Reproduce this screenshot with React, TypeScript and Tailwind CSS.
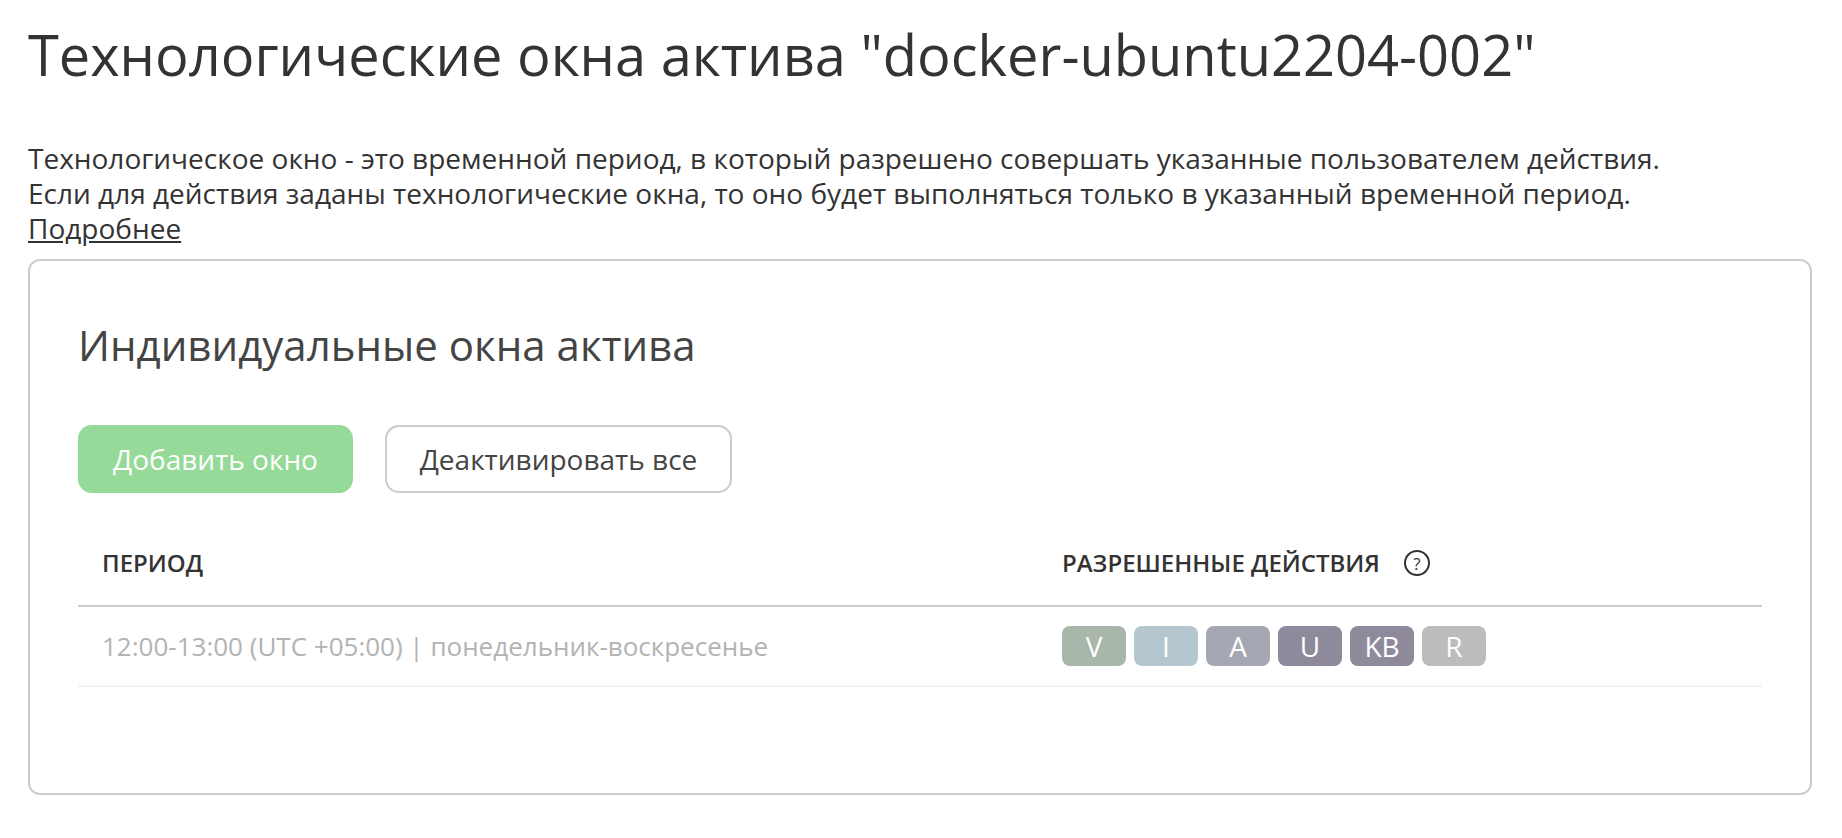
export default function App() {
  const badges = [
    ["V", "bg-[#a8b7aa]"],
    ["I", "bg-[#b5c7ce]"],
    ["A", "bg-[#a5a8b2]"],
    ["U", "bg-[#8e8a9b]"],
    ["KB", "bg-[#8e8a9b]"],
    ["R", "bg-[#bbbdbc]"],
  ];
  return (
    <div className="bg-white h-[838px] px-[28px] pt-[14px] font-['Open_Sans',sans-serif] text-[#333333] overflow-hidden">
      <h1 className="text-[56px] leading-[80px] font-normal">Технологические окна актива "docker-ubuntu2204-002"</h1>
      <p className="mt-[47px] text-[28px] leading-[35px]">
        Технологическое окно - это временной период, в который разрешено совершать указанные пользователем действия.
        <br />
        Если для действия заданы технологические окна, то оно будет выполняться только в указанный временной период.
        <br />
        <a className="underline">Подробнее</a>
      </p>
      <div className="mt-[13px] w-[1784px] h-[536px] border-2 border-[#cccccc] rounded-[12px] px-[48px] pt-[54px]">
        <h2 className="text-[42px] leading-[60px] text-[#444444]">Индивидуальные окна актива</h2>
        <div className="mt-[50px] flex gap-[32px]">
          <button className="h-[68px] w-[275px] rounded-[14px] bg-[#95da98] text-white text-[28px]">Добавить окно</button>
          <button className="h-[68px] w-[347px] rounded-[14px] border-2 border-[#cccccc] text-[#444444] text-[28px]">Деактивировать все</button>
        </div>
        <div className="mt-[32px] w-[1684px]">
          <div className="flex h-[82px] border-b-2 border-[#cccccc] items-center pb-[4px]">
            <div className="w-[960px] pl-[24px] text-[24px] font-semibold">ПЕРИОД</div>
            <div className="flex items-center pl-[24px] text-[24px] font-semibold">
              РАЗРЕШЕННЫЕ ДЕЙСТВИЯ
              <span className="ml-[24px] w-[26px] h-[26px] rounded-full border-2 border-[#333333] flex items-center justify-center text-[17px] font-normal leading-none">?</span>
            </div>
          </div>
          <div className="flex h-[80px] border-b-2 border-[#f2f2f2] items-center">
            <div className="w-[960px] pl-[24px] text-[26px] text-[#b3b3b3]">12:00-13:00 (UTC +05:00) | понедельник-воскресенье</div>
            <div className="flex pl-[24px] gap-[8px]">
              {badges.map(([t, c]) => (
                <span key={t} className={`w-[64px] h-[40px] rounded-[8px] ${c} text-white text-[28px] flex items-center justify-center`}>{t}</span>
              ))}
            </div>
          </div>
        </div>
      </div>
    </div>
  );
}
